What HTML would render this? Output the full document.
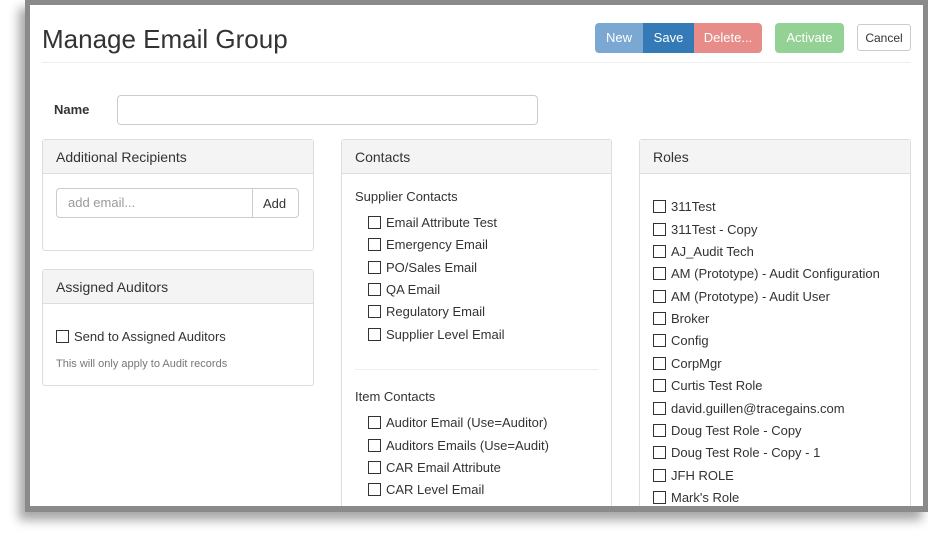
<!DOCTYPE html>
<html><head><style>
*{margin:0;padding:0;box-sizing:border-box}
body{width:928px;height:536px;background:#fff;position:relative;overflow:hidden;font-family:"Liberation Sans",sans-serif;color:#333}
.frame{position:absolute;left:25px;top:0;width:903px;height:512px;background:#8a8a8a;box-shadow:-6px 8px 10px rgba(0,0,0,.35)}
.inner{position:absolute;left:30px;top:5px;width:893px;height:501px;background:#fff;overflow:hidden}
.a{position:absolute;white-space:nowrap}
.t{position:absolute;white-space:nowrap;font-size:13px;line-height:16px}
.cb{position:absolute;width:13px;height:13px;border:1px solid #333;background:#fff}
.panel{position:absolute;border:1px solid #ddd;border-radius:3px;background:#fff}
.ph{position:absolute;left:0;right:0;top:0;height:34px;background:#f4f4f4;border-bottom:1px solid #ddd;font-size:14px;line-height:34px;padding-left:13px}
.btn{position:absolute;top:23px;height:30px;font-size:13px;line-height:30px;text-align:center;color:#fff}
</style></head><body>
<div class="frame"></div>
<div class="inner"></div>
<div class="a" style="left:42px;top:22px;font-size:26px;line-height:34px;color:#333">Manage Email Group</div>
<div class="btn" style="left:595px;width:48px;background:#7aa8d2;border-radius:4px 0 0 4px">New</div>
<div class="btn" style="left:643px;width:51px;background:#337ab7">Save</div>
<div class="btn" style="left:694px;width:68px;background:#e78c89;border-radius:0 4px 4px 0">Delete...</div>
<div class="btn" style="left:775px;width:69px;background:#94d194;border-radius:4px">Activate</div>
<div class="btn" style="left:857px;top:24px;width:54px;height:27px;line-height:26px;background:#fff;border:1px solid #ccc;border-radius:3px;color:#333;font-size:12px">Cancel</div>
<div class="a" style="left:42px;top:62px;width:869px;height:1px;background:#eee"></div>
<div class="a" style="left:54px;top:102px;font-size:13px;font-weight:bold;line-height:16px">Name</div>
<div class="a" style="left:117px;top:95px;width:421px;height:30px;border:1px solid #ccc;border-radius:4px"></div>

<div class="panel" style="left:42px;top:139px;width:272px;height:112px"><div class="ph">Additional Recipients</div></div>
<div class="a" style="left:56px;top:188px;width:243px;height:30px;border:1px solid #ccc;border-radius:4px"></div>
<div class="a" style="left:252px;top:188px;width:1px;height:30px;background:#ccc"></div>
<div class="t" style="left:68px;top:195px;color:#999">add email...</div>
<div class="t" style="left:263px;top:196px">Add</div>

<div class="panel" style="left:42px;top:269px;width:272px;height:117px"><div class="ph">Assigned Auditors</div></div>
<div class="cb" style="left:56px;top:330px"></div>
<div class="t" style="left:74px;top:329px">Send to Assigned Auditors</div>
<div class="a" style="left:56px;top:357px;font-size:11px;line-height:14px;color:#777">This will only apply to Audit records</div>

<div class="panel" style="left:341px;top:139px;width:271px;height:372px"><div class="ph">Contacts</div></div>
<div class="t" style="left:355px;top:189px">Supplier Contacts</div>
<div class="cb" style="left:368px;top:216px"></div><div class="t" style="left:386px;top:215px">Email Attribute Test</div>
<div class="cb" style="left:368px;top:238px"></div><div class="t" style="left:386px;top:237px">Emergency Email</div>
<div class="cb" style="left:368px;top:261px"></div><div class="t" style="left:386px;top:260px">PO/Sales Email</div>
<div class="cb" style="left:368px;top:283px"></div><div class="t" style="left:386px;top:282px">QA Email</div>
<div class="cb" style="left:368px;top:305px"></div><div class="t" style="left:386px;top:304px">Regulatory Email</div>
<div class="cb" style="left:368px;top:328px"></div><div class="t" style="left:386px;top:327px">Supplier Level Email</div>
<div class="a" style="left:355px;top:369px;width:243px;height:1px;background:#eee"></div>
<div class="t" style="left:355px;top:389px">Item Contacts</div>
<div class="cb" style="left:368px;top:416px"></div><div class="t" style="left:386px;top:415px">Auditor Email (Use=Auditor)</div>
<div class="cb" style="left:368px;top:439px"></div><div class="t" style="left:386px;top:438px">Auditors Emails (Use=Audit)</div>
<div class="cb" style="left:368px;top:461px"></div><div class="t" style="left:386px;top:460px">CAR Email Attribute</div>
<div class="cb" style="left:368px;top:483px"></div><div class="t" style="left:386px;top:482px">CAR Level Email</div>

<div class="panel" style="left:639px;top:139px;width:272px;height:372px"><div class="ph">Roles</div></div>
<div class="cb" style="left:653px;top:200px"></div><div class="t" style="left:671px;top:199px">311Test</div>
<div class="cb" style="left:653px;top:223px"></div><div class="t" style="left:671px;top:222px">311Test - Copy</div>
<div class="cb" style="left:653px;top:245px"></div><div class="t" style="left:671px;top:244px">AJ_Audit Tech</div>
<div class="cb" style="left:653px;top:267px"></div><div class="t" style="left:671px;top:266px">AM (Prototype) - Audit Configuration</div>
<div class="cb" style="left:653px;top:290px"></div><div class="t" style="left:671px;top:289px">AM (Prototype) - Audit User</div>
<div class="cb" style="left:653px;top:312px"></div><div class="t" style="left:671px;top:311px">Broker</div>
<div class="cb" style="left:653px;top:334px"></div><div class="t" style="left:671px;top:333px">Config</div>
<div class="cb" style="left:653px;top:357px"></div><div class="t" style="left:671px;top:356px">CorpMgr</div>
<div class="cb" style="left:653px;top:379px"></div><div class="t" style="left:671px;top:378px">Curtis Test Role</div>
<div class="cb" style="left:653px;top:402px"></div><div class="t" style="left:671px;top:401px">david.guillen@tracegains.com</div>
<div class="cb" style="left:653px;top:424px"></div><div class="t" style="left:671px;top:423px">Doug Test Role - Copy</div>
<div class="cb" style="left:653px;top:446px"></div><div class="t" style="left:671px;top:445px">Doug Test Role - Copy - 1</div>
<div class="cb" style="left:653px;top:469px"></div><div class="t" style="left:671px;top:468px">JFH ROLE</div>
<div class="cb" style="left:653px;top:491px"></div><div class="t" style="left:671px;top:490px">Mark's Role</div>

<div class="a" style="left:25px;top:506px;width:903px;height:6px;background:#8a8a8a"></div>
<div class="a" style="left:0;top:512px;width:928px;height:24px;background:transparent"></div>
<div class="a" style="left:923px;top:0;width:5px;height:512px;background:#8a8a8a"></div>
<div class="a" style="left:25px;top:0;width:903px;height:5px;background:#8a8a8a"></div>
<div class="a" style="left:25px;top:0;width:5px;height:512px;background:#8a8a8a"></div>
</body></html>
